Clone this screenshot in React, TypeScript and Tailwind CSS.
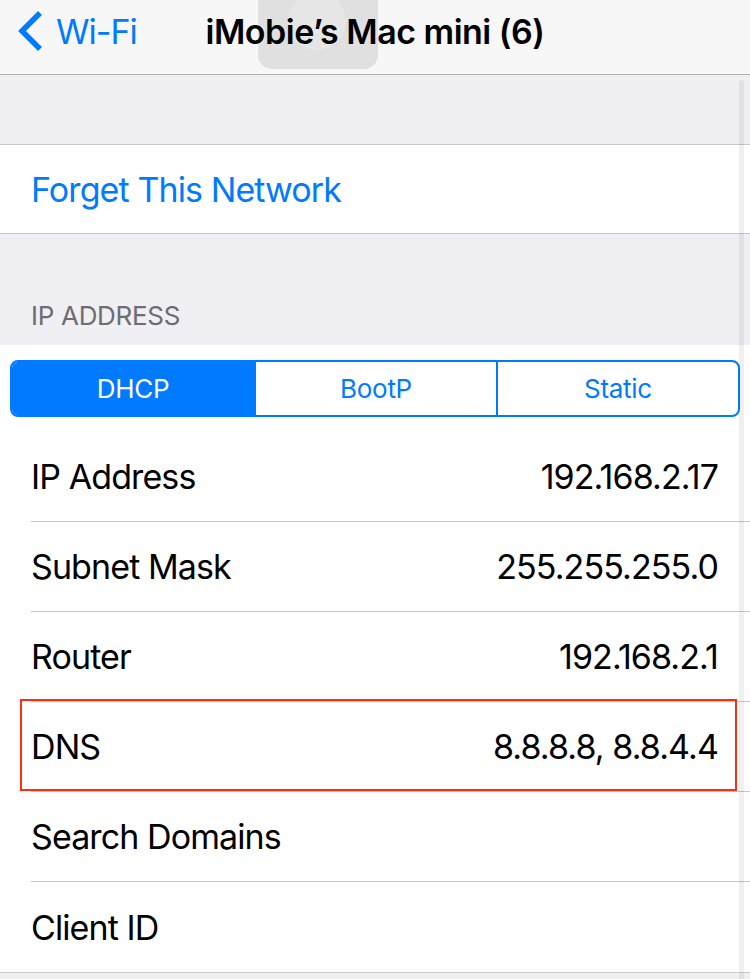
import React from "react";

const rows = [
  { label: "IP Address", value: "192.168.2.17" },
  { label: "Subnet Mask", value: "255.255.255.0" },
  { label: "Router", value: "192.168.2.1" },
  { label: "DNS", value: "8.8.8.8, 8.8.4.4", marked: true },
  { label: "Search Domains", value: "" },
  { label: "Client ID", value: "" },
];

function NavBar() {
  return (
    <div className="relative grid h-[75px] grid-cols-[1fr_auto_1fr] items-center border-b border-[#b2b2b2] bg-[#f7f7f8] pb-[12px]">
      {/* assistive touch blob sitting over the title */}
      <div className="absolute left-[258px] top-[-20px] h-[89px] w-[120px] rounded-[14px] bg-black/[0.09]">
        <div className="absolute left-[30px] top-[12px] h-[58px] w-[58px] rounded-full bg-white/20" />
      </div>
      <div className="relative flex items-center gap-[13px] pl-[17px] text-[34px] tracking-[-1px] text-[#007aff]">
        <svg width="26" height="42" viewBox="0 0 26 42" fill="none">
          <polyline points="23,3 5,21 23,39" stroke="#007aff" strokeWidth="5.5" strokeLinejoin="miter" />
        </svg>
        <span>Wi-Fi</span>
      </div>
      <div className="relative text-[34px] font-semibold tracking-[-0.5px] text-black">
        iMobie’s Mac mini (6)
      </div>
      <div />
    </div>
  );
}

export default function App() {
  return (
    <div className="relative h-[979px] w-[750px] overflow-hidden bg-[#efeff4] font-['Inter','Liberation_Sans',sans-serif] antialiased">
      <NavBar />

      <div className="h-[70px] border-b border-[#c8c7cc]" />

      <div className="flex h-[89px] items-center border-b border-[#c8c7cc] bg-white pl-[31px] text-[34px] tracking-[-0.9px] text-[#007aff]">
        Forget This Network
      </div>

      <div className="flex h-[111px] items-end pb-[10px] pl-[31px] text-[26px] tracking-[-0.3px] text-[#6d6d72]">
        IP ADDRESS
      </div>

      <div className="bg-white">
        <div className="px-[10px] py-[15px]">
          <div className="grid h-[57px] grid-cols-3 overflow-hidden rounded-[8px] border-2 border-[#007aff] text-[26px] tracking-[-0.3px]">
            <div className="flex items-center justify-center bg-[#007aff] text-white">DHCP</div>
            <div className="flex items-center justify-center border-l-2 border-[#007aff] text-[#007aff]">
              BootP
            </div>
            <div className="flex items-center justify-center border-l-2 border-[#007aff] text-[#007aff]">
              Static
            </div>
          </div>
        </div>

        {rows.map((r, i) => {
          const last = i === rows.length - 1;
          return (
            <div
              key={r.label}
              className={
                last
                  ? "relative flex h-[91px] border-b border-[#c8c7cc] pl-[31px]"
                  : "relative flex h-[90px] pl-[31px]"
              }
            >
              <div
                className={
                  last
                    ? "flex flex-1 items-center justify-between pr-[32px] text-[34px] tracking-[-0.9px] text-black"
                    : "flex flex-1 items-center justify-between border-b border-[#c8c7cc] pr-[32px] text-[34px] tracking-[-0.9px] text-black"
                }
              >
                <span>{r.label}</span>
                <span>{r.value}</span>
              </div>
              {r.marked && (
                <div className="absolute left-[20px] top-[-3px] h-[92px] w-[717px] border-2 border-[#ff2d10]" />
              )}
            </div>
          );
        })}
      </div>

      {/* scroll indicator */}
      <div className="absolute bottom-0 left-[739px] top-[80px] w-[5px] rounded-t-full bg-black/[0.06]" />
    </div>
  );
}
